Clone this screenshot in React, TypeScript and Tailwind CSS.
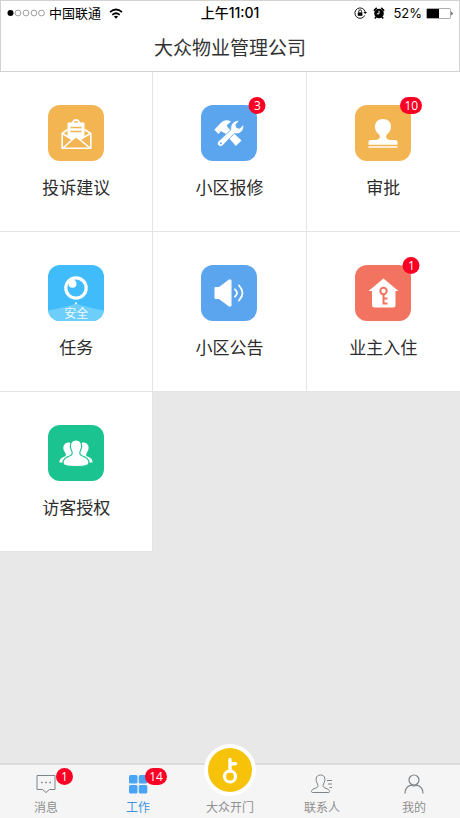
import type { ReactNode } from "react";

const Mail = () => (
  <svg viewBox="0 0 56 56" className="size-full" fill="none" aria-hidden="true">
    <path d="M19.5 24.5 14.2 28.5V43.200H42.800V28.500L36.500 24.500" stroke="#fff" strokeWidth="1.600" strokeLinejoin="round" />
    <path d="M24.500 18.500a3.500 3.500 0 0 1 7 0" stroke="#fff" strokeWidth="1.800" />
    <path d="M19.500 18.500a1 1 0 0 1 1-1h15a1 1 0 0 1 1 1V32.500L31.500 35 28 32l-3.500 3-5-2.500z" fill="#fff" />
    <path d="M22.500 22.500h11M22.500 26.500h11" stroke="#f2b552" strokeWidth="1.300" />
    <path d="M14.500 28.500 24 34.500M42.500 28.500 32 34.500M15 43l11-9.800q2-1.800 4 0L42 43" stroke="#fff" strokeWidth="1.500" />
  </svg>
);

const Tools = () => (
  <svg viewBox="0 0 56 56" className="size-full" aria-hidden="true">
    <path d="M13.300 24.800 19.500 18.300C22.500 15 26 14.500 30 16.500l-4.200 3.800 1.200 2.900-4.500 4.500-2.500-1.700-2.500 3z" fill="#fff" />
    <path d="m21.500 25.500 4.300-4L40.500 35.500 34.800 41z" fill="#fff" />
    <path d="M17.300 36.300 29.800 25c-1-5.500 3-10.200 8.700-9.500l-3.700 4.200.9 3 3.100.500 3.700-3.700c1.300 6-3.700 10.600-9.200 9L21.800 40.500c-3.200 2.500-7-1.200-4.500-4.200z" fill="#fff" stroke="#5ba5ee" strokeWidth="0.800" />
    <circle cx="19.800" cy="38.200" r="1" fill="#5ba5ee" />
  </svg>
);

const Stamp = () => (
  <svg viewBox="0 0 56 56" className="size-full" aria-hidden="true">
    <path d="M13.500 39.800v-2.600c0-1.500 1-2.200 2.500-2.200h4c4 0 6-2.300 4.300-5.500C18 26 18 14 28 14s10 12 3.700 15.500C30 32.700 32 35 36 35h4c1.500 0 2.500.700 2.500 2.200v2.600z" fill="#fff" />
    <path d="M13.500 42h29" stroke="#fff" strokeWidth="1.700" />
  </svg>
);

const Security = () => (
  <svg viewBox="0 0 56 56" className="size-full" aria-hidden="true">
    <path d="M0 45.500Q16 42.500 28 38.500q12 4 28 7V56H0z" fill="#6dcefa" />
    <circle cx="28" cy="23" r="10.200" fill="none" stroke="#fff" strokeWidth="3.200" />
    <circle cx="24.500" cy="18.800" r="4" fill="#fff" />
    <circle cx="28" cy="38.300" r="1" fill="#fff" />
  </svg>
);

const Speaker = () => (
  <svg viewBox="0 0 56 56" className="size-full" fill="none" aria-hidden="true">
    <path d="M14.500 22H18L28 14.500q2-1 2 1v25q0 2-2 1L18 34h-3.500a1 1 0 0 1-1-1V23a1 1 0 0 1 1-1z" fill="#fff" />
    <path d="M30.300 15v26" stroke="#c9dff5" strokeWidth="1" />
    <path d="M34 24.300q4 3.700 0 7.400M38 20.500q7 7.500 0 15" stroke="#fff" strokeWidth="1.800" strokeLinecap="round" />
  </svg>
);

const House = () => (
  <svg viewBox="0 0 56 56" className="size-full" fill="none" aria-hidden="true">
    <path d="M28.500 13.500 43.500 26H40.500V40a2.500 2.500 0 0 1-2.500 2.500H19.500A2.500 2.500 0 0 1 17 40V26h-3.500z" fill="#fff" />
    <circle cx="28.500" cy="26" r="3.200" stroke="#f2735f" strokeWidth="2" />
    <path d="M28.500 29v10.500M28.500 33.500h4M28.500 38.500h4" stroke="#f2735f" strokeWidth="2" />
  </svg>
);

const People = () => (
  <svg viewBox="0 0 56 56" className="size-full" aria-hidden="true">
    <g fill="#fff">
      <path d="M11.500 37.500c0-3.500 1.500-4.500 5.300-6 1.700-1 1-2.700.2-4-3.500-5-1-10.500 4-10 2 0 3.300 1 4 2.500L27 37.500z" />
      <path d="M44.500 37.500c0-3.500-1.500-4.500-5.300-6-1.700-1-1-2.700-.2-4 3.500-5 1-10.500-4-10-2 0-3.300 1-4 2.500L29 37.500z" />
      <path d="M28 15c5.500 0 7 5.500 4.500 10.500-1.500 3-.700 4.500 2 5.500 4.500 1.500 6.500 3.500 6.500 7 0 3-5 3.500-13 3.500S15 41 15 38c0-3.500 2-5.500 6.500-7 2.700-1 3.500-2.500 2-5.500C21 20.500 22.500 15 28 15z" stroke="#1bc391" strokeWidth="1.200" />
    </g>
  </svg>
);

type App = { label: string; color: string; icon: ReactNode; badge?: number; caption?: string };

const apps: App[] = [
  { label: "投诉建议", color: "bg-[#f2b552]", icon: <Mail /> },
  { label: "小区报修", color: "bg-[#5ba5ee]", icon: <Tools />, badge: 3 },
  { label: "审批", color: "bg-[#f2b552]", icon: <Stamp />, badge: 10 },
  { label: "任务", color: "bg-[#40bcfa]", icon: <Security />, caption: "安全" },
  { label: "小区公告", color: "bg-[#5ba5ee]", icon: <Speaker /> },
  { label: "业主入住", color: "bg-[#f2735f]", icon: <House />, badge: 1 },
  { label: "访客授权", color: "bg-[#1bc391]", icon: <People /> },
];

const Badge = ({ count }: { count: number }) => (
  <span
    className={`absolute -top-2 left-full flex h-[17px] -translate-x-1/2 items-center justify-center rounded-full bg-[#fb0024] font-['Open_Sans',sans-serif] text-xs leading-4 text-white ${
      count > 9 ? "w-[22px]" : "w-[17px]"
    }`}
  >
    {count}
  </span>
);

const StatusBar = () => (
  <div className="grid h-6 grid-cols-[1fr_auto_1fr] items-center px-1.5 text-[13px] leading-6 text-black">
    <div className="flex items-center">
      <svg viewBox="0 0 38 8" className="h-2 w-[38px]" fill="none" stroke="#777" strokeWidth="0.700" aria-hidden="true">
        <circle cx="3.500" cy="4" r="3" fill="#000" stroke="none" />
        <circle cx="11" cy="4" r="2.900" />
        <circle cx="19" cy="4" r="2.900" />
        <circle cx="27" cy="4" r="2.900" />
        <circle cx="34.500" cy="4" r="2.900" />
      </svg>
      <span className="ml-1">中国联通</span>
      <svg viewBox="0 0 14 11" className="ml-2 h-[11px] w-3.5" fill="none" stroke="#000" strokeWidth="1.800" aria-hidden="true">
        <path d="M1 4.200q6-5.400 12 0M3.300 6.900q3.700-3.300 7.400 0" />
        <path d="M7 10.700 4.900 8.600q2.100-1.700 4.200 0z" fill="#000" stroke="none" />
      </svg>
    </div>
    <span className="text-sm leading-6 font-medium">上午11:01</span>
    <div className="flex items-center justify-end">
      <svg viewBox="0 0 13 12" className="h-3 w-[13px]" fill="none" stroke="#000" aria-hidden="true">
        <path d="M10.800 8.400A5.200 5.200 0 1 1 11.200 5" strokeWidth="0.900" />
        <path d="m9.500 5 1.700 2L13 5z" fill="#000" stroke="none" />
        <rect x="3.800" y="5.400" width="4.600" height="3.400" fill="#000" stroke="none" />
        <path d="M4.700 5.500V4.300a1.400 1.400 0 0 1 2.800 0v1.200" strokeWidth="0.900" />
      </svg>
      <svg viewBox="0 0 12 12" className="ml-1.5 size-3" aria-hidden="true">
        <circle cx="6" cy="6.500" r="4.800" />
        <path d="M.8 3.700 3.700.9M11.200 3.700 8.300.9M3 10l-1.200 1.500M9 10l1.200 1.500" stroke="#000" strokeWidth="1.500" />
        <path d="M6 3.800v3H3.800" fill="none" stroke="#fff" strokeWidth="1" />
      </svg>
      <span className="ml-2">52%</span>
      <svg viewBox="0 0 27 11" className="ml-1 h-[11px] w-[27px]" aria-hidden="true">
        <rect x=".5" y=".5" width="24" height="10" rx="1" fill="none" stroke="#888" strokeWidth="0.700" />
        <path d="M1 1h12v9H1z" />
        <path d="M25.500 3.500q2 2 0 4z" />
      </svg>
    </div>
  </div>
);

const ChatIcon = () => (
  <svg viewBox="0 0 24 24" className="size-6" fill="none" stroke="#7d8489" aria-hidden="true">
    <path d="M3 3.500h18v14h-5.500L12 20.500l-3.500-3H3z" />
    <path d="M7 10.500h1.600M11.200 10.500h1.600M15.400 10.500H17" strokeWidth="1.600" />
  </svg>
);

const GridIcon = () => (
  <svg viewBox="0 0 24 24" className="size-6" fill="#49a4f5" aria-hidden="true">
    <rect x="3" y="3" width="8.500" height="8.500" rx="1.500" />
    <rect x="12.800" y="3" width="8.500" height="8.500" rx="1.500" />
    <rect x="3" y="13" width="8.500" height="8.500" rx="1.500" />
    <rect x="12.800" y="13" width="8.500" height="8.500" rx="1.500" />
  </svg>
);

const ContactsIcon = () => (
  <svg viewBox="0 0 24 24" className="size-6" fill="none" stroke="#7d8489" aria-hidden="true">
    <path d="M10.500 3C5.500 3 5.200 8 7.500 12c1 2 .5 3-1.500 4-3 1.200-4.500 1.500-4.500 3.500 0 1 .5 1 1.500 1h15c1 0 1.500 0 1.500-1 0-2-1.500-2.300-4.500-3.500-2-1-2.500-2-1.500-4 2.300-4 2-9-3-9z" />
    <path d="M17 8.500h5M18 12h4M19.500 15.500H22" />
  </svg>
);

const MeIcon = () => (
  <svg viewBox="0 0 24 24" className="size-6" fill="none" stroke="#7d8489" strokeWidth="1.200" aria-hidden="true">
    <circle cx="12" cy="8" r="5" />
    <path d="M3 21.500c0-4.500 2.500-7.300 6-8.300q3 1.200 6 0c3.500 1 6 3.800 6 8.300" />
  </svg>
);

const KeyIcon = () => (
  <svg viewBox="0 0 44 44" className="size-11 rounded-full bg-[#f6c30a]" fill="none" stroke="#fff" aria-hidden="true">
    <circle cx="22" cy="28.500" r="5.500" strokeWidth="3.200" />
    <path d="M22 23V11.500M22 15.700h5.500" strokeWidth="3.400" strokeLinecap="round" />
  </svg>
);

const tabs: { label: string; icon: ReactNode; badge?: number; active?: boolean; raised?: boolean }[] = [
  { label: "消息", icon: <ChatIcon />, badge: 1 },
  { label: "工作", icon: <GridIcon />, badge: 14, active: true },
  { label: "大众开门", icon: <KeyIcon />, raised: true },
  { label: "联系人", icon: <ContactsIcon /> },
  { label: "我的", icon: <MeIcon /> },
];

export default function App() {
  return (
    <div className="flex min-h-screen flex-col bg-[#e8e8e8] font-['Inter','Noto_Sans_CJK_SC',sans-serif]">
      <header className="border border-[#d2d2d2] bg-white">
        <StatusBar />
        <h1 className="pt-0.5 text-center text-[19px] leading-[44px] text-[#333]">大众物业管理公司</h1>
      </header>

      <main className="flex-1">
        <div className="grid grid-cols-3">
          {apps.map((app) => (
            <button
              key={app.label}
              type="button"
              className="flex h-40 flex-col items-center border-r border-b border-[#e4e4e4] bg-white pt-[33px] nth-[3n]:border-r-0"
            >
              <span className={`relative size-14 rounded-xl ${app.color}`}>
                <span className="block size-full overflow-hidden rounded-xl">{app.icon}</span>
                {app.caption && (
                  <span className="absolute inset-x-0 bottom-0 text-center text-xs leading-[14px] text-white/90">
                    {app.caption}
                  </span>
                )}
                {app.badge && <Badge count={app.badge} />}
              </span>
              <span className="mt-[15px] text-[17px] leading-6 text-[#2c2c2c]">{app.label}</span>
            </button>
          ))}
        </div>
      </main>

      <nav className="sticky bottom-0 grid h-[55px] grid-cols-5 border-t-2 border-[#dcdcdc] bg-[#f5f5f5]">
        {tabs.map((tab) => (
          <button
            key={tab.label}
            type="button"
            aria-current={tab.active ? "page" : undefined}
            className={`flex flex-col items-center justify-end pb-px text-xs leading-[18px] ${
              tab.active ? "text-[#3d92dc]" : "text-[#8f8f8f]"
            }`}
          >
            {tab.raised ? (
              <span className="-mt-6 mb-[3px] rounded-full bg-white p-1">{tab.icon}</span>
            ) : (
              <span className="relative mb-[3px] size-6">
                {tab.icon}
                {tab.badge && (
                  <span
                    className={`absolute -top-1 flex h-[17px] items-center justify-center rounded-full bg-[#fb0024] font-['Open_Sans',sans-serif] text-xs text-white ${
                      tab.badge > 9 ? "left-[19px] w-[22px]" : "left-[22px] w-[17px]"
                    }`}
                  >
                    {tab.badge}
                  </span>
                )}
              </span>
            )}
            <span>{tab.label}</span>
          </button>
        ))}
      </nav>
    </div>
  );
}
